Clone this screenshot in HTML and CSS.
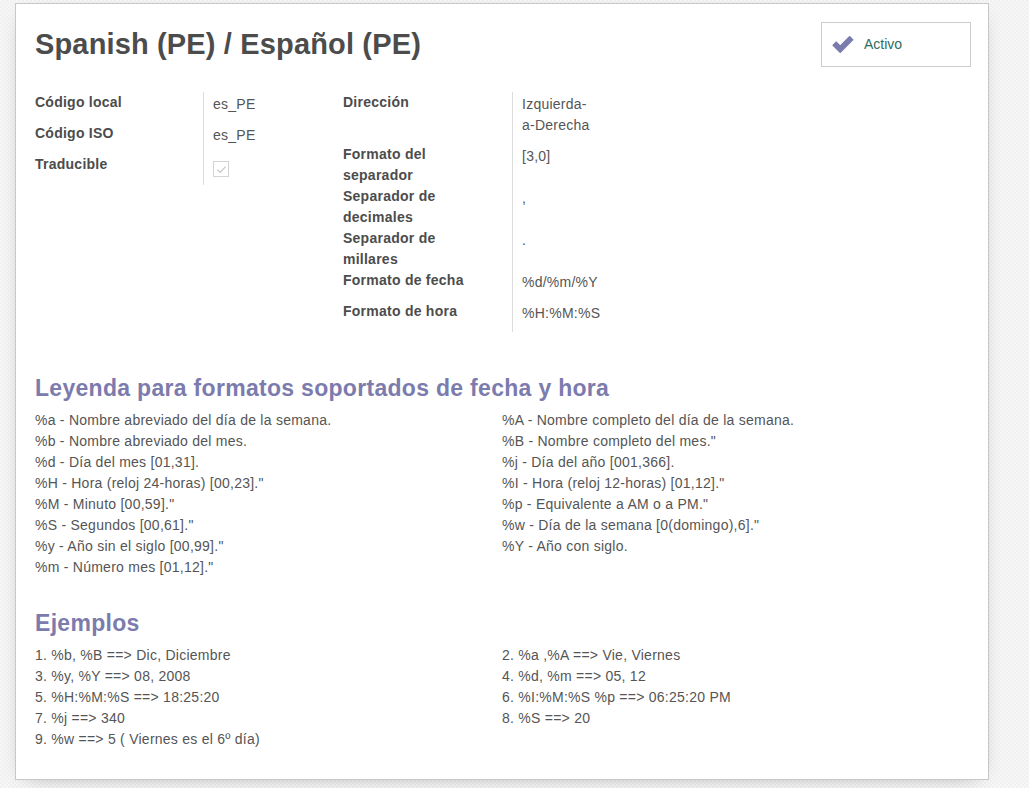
FILE: index.html
```html
<!DOCTYPE html>
<html lang="es">
<head>
<meta charset="utf-8">
<title>Spanish (PE) / Español (PE)</title>
<link rel="stylesheet" href="styles.css">
</head>
<body>
<div class="sheet">
  <div class="header">
    <h1 class="title">Spanish (PE) / Español (PE)</h1>
    <div class="stat-button">
      <svg class="check-icon" width="24" height="20" viewBox="0 0 24 20"><path d="M2.2 10.2 L5.2 7.2 L9.2 11.2 L18.6 1.8 L21.6 4.8 L9.2 17.2 Z" fill="#7c7bad" stroke="#7c7bad" stroke-width="1.6" stroke-linejoin="round"/></svg>
      <span class="stat-text">Activo</span>
    </div>
  </div>

  <div class="groups">
    <div class="group group-left">
      <div class="label">Código local</div><div class="value">es_PE</div>
      <div class="label">Código ISO</div><div class="value">es_PE</div>
      <div class="label">Traducible</div><div class="value"><span class="checkbox"><svg width="13" height="13" viewBox="0 0 13 13"><path d="M2.5 6.8 L5.2 9.4 L10.6 3.6" fill="none" stroke="#c8c8c8" stroke-width="1.3"/></svg></span></div>
    </div>
    <div class="group group-right">
      <div class="label">Dirección</div><div class="value">Izquierda-a-Derecha</div>
      <div class="label">Formato del separador</div><div class="value nowrap">[3,0]</div>
      <div class="label">Separador de decimales</div><div class="value nowrap">,</div>
      <div class="label">Separador de millares</div><div class="value nowrap">.</div>
      <div class="label">Formato de fecha</div><div class="value nowrap">%d/%m/%Y</div>
      <div class="label">Formato de hora</div><div class="value nowrap">%H:%M:%S</div>
    </div>
  </div>

  <h2 class="section-title first">Leyenda para formatos soportados de fecha y hora</h2>
  <div class="two-cols">
    <div class="col">
      <div>%a - Nombre abreviado del día de la semana.</div>
      <div>%b - Nombre abreviado del mes.</div>
      <div>%d - Día del mes [01,31].</div>
      <div>%H - Hora (reloj 24-horas) [00,23]."</div>
      <div>%M - Minuto [00,59]."</div>
      <div>%S - Segundos [00,61]."</div>
      <div>%y - Año sin el siglo [00,99]."</div>
      <div>%m - Número mes [01,12]."</div>
    </div>
    <div class="col">
      <div>%A - Nombre completo del día de la semana.</div>
      <div>%B - Nombre completo del mes."</div>
      <div>%j - Día del año [001,366].</div>
      <div>%I - Hora (reloj 12-horas) [01,12]."</div>
      <div>%p - Equivalente a AM o a PM."</div>
      <div>%w - Día de la semana [0(domingo),6]."</div>
      <div>%Y - Año con siglo.</div>
    </div>
  </div>

  <h2 class="section-title">Ejemplos</h2>
  <div class="two-cols">
    <div class="col">
      <div>1. %b, %B ==&gt; Dic, Diciembre</div>
      <div>3. %y, %Y ==&gt; 08, 2008</div>
      <div>5. %H:%M:%S ==&gt; 18:25:20</div>
      <div>7. %j ==&gt; 340</div>
      <div>9. %w ==&gt; 5 ( Viernes es el 6º día)</div>
    </div>
    <div class="col">
      <div>2. %a ,%A ==&gt; Vie, Viernes</div>
      <div>4. %d, %m ==&gt; 05, 12</div>
      <div>6. %I:%M:%S %p ==&gt; 06:25:20 PM</div>
      <div>8. %S ==&gt; 20</div>
    </div>
  </div>
</div>
</body>
</html>
```

FILE: styles.css
```css
html, body {
  margin: 0;
  padding: 0;
}
body {
  background-color: #f3f3f3;
  background-image: repeating-conic-gradient(#f0f0f0 0% 25%, #f7f7f7 0% 50%);
  background-size: 4px 4px;
  font-family: "Liberation Sans", Arial, sans-serif;
  font-size: 14px;
  line-height: 21px;
  letter-spacing: 0.25px;
  color: #4c4c4c;
  min-height: 788px;
}
.sheet {
  box-sizing: border-box;
  width: 974px;
  margin: 3px 0 0 15px;
  padding: 18px 17px 29px 19px;
  background: #fff;
  border: 1px solid #c8c8c8;
  box-shadow: 0 5px 20px -12px rgba(0,0,0,0.45);
}
.header {
  display: flex;
  justify-content: space-between;
  align-items: flex-start;
}
.title {
  margin: 4px 0 0 0;
  font-size: 29px;
  line-height: 36px;
  letter-spacing: 0.15px;
  font-weight: bold;
  color: #4c4c4c;
}
.stat-button {
  box-sizing: border-box;
  width: 150px;
  height: 45px;
  margin-right: 0;
  border: 1px solid #cccccc;
  background: #fff;
  display: flex;
  align-items: center;
  padding-left: 9px;
}
.check-icon {
  display: block;
  margin-right: 9px;
}
.stat-text {
  color: #2f6b5f;
  font-size: 14px;
  letter-spacing: 0;
}
.groups {
  display: flex;
  margin-top: 25px;
  align-items: flex-start;
}
.group {
  display: grid;
}
.group-left {
  width: 308px;
  grid-template-columns: 169px 1fr;
}
.group-right {
  grid-template-columns: 170px 82px;
}
.label {
  font-weight: bold;
  color: #4c4c4c;
  line-height: 21px;
  padding-right: 28px;
  border-right: 1px solid #dcdcdc;
}
.value {
  color: #555;
  line-height: 21px;
  padding: 2px 0 8px 9px;
}
.nowrap {
  white-space: nowrap;
}
.checkbox {
  display: block;
  box-sizing: border-box;
  width: 16px;
  height: 16px;
  margin-top: 5px;
  border: 1px solid #d4d4d4;
  background: #fff;
}
.checkbox svg {
  display: block;
  margin: 1px 0 0 1px;
}
.section-title {
  margin: 32px 0 9px 0;
  font-size: 23px;
  line-height: 26px;
  letter-spacing: 0.3px;
  font-weight: bold;
  color: #7c7bad;
}
.section-title.first {
  margin-top: 43px;
}
.two-cols {
  display: grid;
  grid-template-columns: 467px 1fr;
  color: #555;
}
```
